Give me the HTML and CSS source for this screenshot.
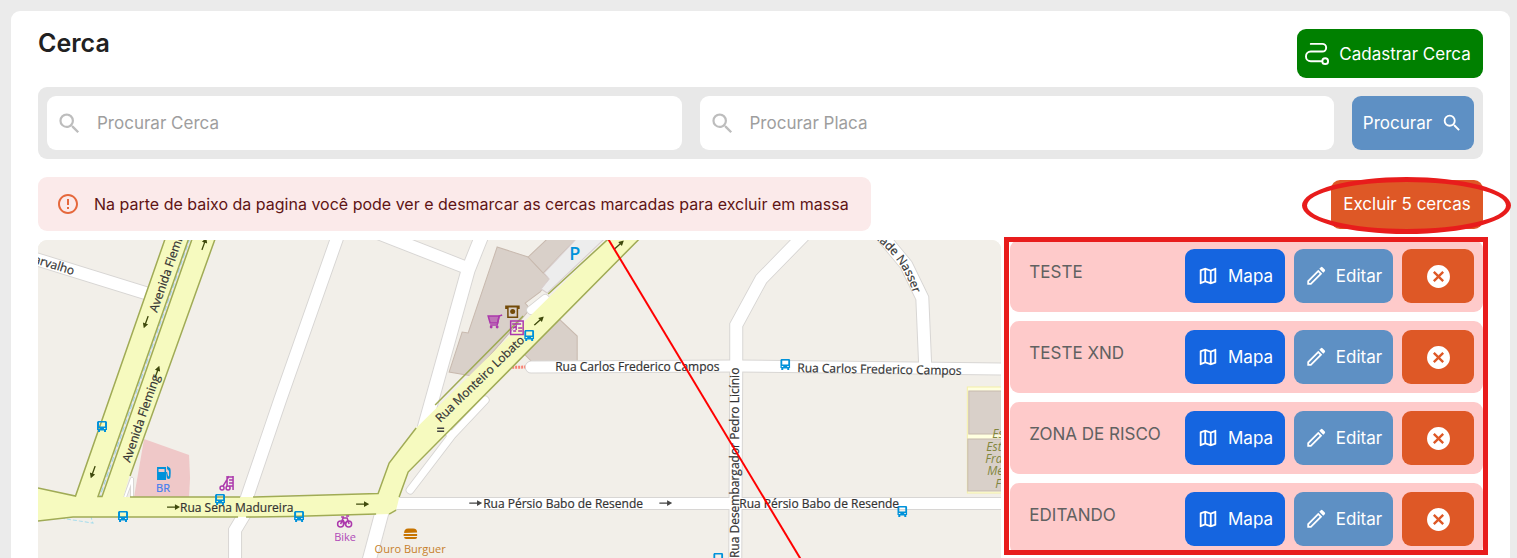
FILE: index.html
```html
<!DOCTYPE html>
<html lang="pt-BR">
<head>
<meta charset="utf-8">
<title>Cerca</title>
<link rel="stylesheet" href="styles.css">
</head>
<body>
<svg class="defs" aria-hidden="true">
  <symbol id="search" viewBox="0 0 24 24"><path d="M15.5 14h-.79l-.28-.27A6.47 6.47 0 0 0 16 9.5 6.5 6.5 0 1 0 9.5 16c1.61 0 3.09-.59 4.23-1.57l.27.28v.79l5 4.99L20.49 19l-4.99-5zm-6 0C7.01 14 5 11.99 5 9.5S7.01 5 9.5 5 14 7.01 14 9.5 11.99 14 9.5 14z"/></symbol>
  <symbol id="mapicon" viewBox="0 0 24 24"><path d="M20.5 3l-.16.03L15 5.1 9 3 3.36 4.9c-.21.07-.36.25-.36.48V20.5c0 .28.22.5.5.5l.16-.03L9 18.9l6 2.1 5.64-1.9c.21-.07.36-.25.36-.48V3.5c0-.28-.22-.5-.5-.5zM10 5.47l4 1.4v11.66l-4-1.4V5.47zM5 6.46l3-1.01v11.7l-3 1.16V6.46zm14 11.08l-3 1.01V6.86l3-1.16v11.84z"/></symbol>
  <symbol id="pencil" viewBox="0 0 24 24"><path fill-rule="evenodd" d="M2.500 21.500v-4.300L14.500 5.200l4.300 4.300L6.800 21.500zM4.500 19.500h1.500L16 9.500 14.500 8 4.500 18zM15.600 4.100l1.700-1.700q.9-.8 1.800 0l2.500 2.500q.8.900 0 1.800l-1.700 1.700z"/></symbol>
  <symbol id="cancel" viewBox="0 0 24 24"><path d="M12 1a11 11 0 1 0 0 22 11 11 0 0 0 0-22zm5.300 14.700-1.600 1.600L12 13.600l-3.700 3.700-1.600-1.600 3.700-3.700-3.700-3.700 1.600-1.600 3.700 3.700 3.700-3.700 1.600 1.600-3.700 3.700z"/></symbol>
</svg>
<main class="card">
  <header class="head">
    <h1 class="title">Cerca</h1>
    <button class="btn btn-new" type="button">
      <svg class="icon-route" viewBox="0 0 26 26" aria-hidden="true"><g fill="none" stroke="#fff" stroke-width="2" stroke-linecap="round"><path d="M6 3h12a4 4 0 0 1 0 8H6a5 5 0 0 0 0 10h11"/><circle cx="21" cy="21" r="3"/></g></svg>
      Cadastrar Cerca
    </button>
  </header>

  <form class="search" role="search">
    <label class="field"><svg class="icon-field" aria-hidden="true"><use href="#search"/></svg><input class="input" type="text" aria-label="Procurar Cerca" placeholder="Procurar Cerca"></label>
    <label class="field"><svg class="icon-field" aria-hidden="true"><use href="#search"/></svg><input class="input" type="text" aria-label="Procurar Placa" placeholder="Procurar Placa"></label>
    <button class="btn btn-search" type="button">Procurar <svg class="icon" aria-hidden="true"><use href="#search"/></svg></button>
  </form>

  <div class="notice">
    <div class="alert" role="alert">
      <svg class="icon-alert" viewBox="0 0 24 24" aria-hidden="true"><path d="M11 15h2v2h-2zm0-8h2v6h-2zm.99-5C6.470 2 2 6.480 2 12s4.470 10 9.990 10C17.520 22 22 17.520 22 12S17.520 2 11.990 2zM12 20c-4.420 0-8-3.580-8-8s3.580-8 8-8 8 3.580 8 8-3.580 8-8 8z"/></svg>
      Na parte de baixo da pagina você pode ver e desmarcar as cercas marcadas para excluir em massa
    </div>
    <div class="mass">
      <button class="btn btn-mass" type="button">Excluir 5 cercas</button>
      <span class="ring"></span>
    </div>
  </div>

  <div class="content">
    <div class="map">
      <svg class="map-svg" viewBox="38 240 963 318" preserveAspectRatio="xMinYMin slice" role="img" aria-label="Mapa">
        <defs>
          <symbol id="bus" viewBox="0 0 10 11"><path fill="#0092da" fill-rule="evenodd" d="M1 0h8l1 1v8H9v2H7V9.500H3V11H1V9H0V1zM2 1.500v4h6v-4zM1.500 7v1h1.500V7zM7 7v1h1.500V7z"/></symbol>
          <symbol id="arrow" viewBox="0 0 14 6"><path d="M0 2.300h8.500V0L14 3 8.500 6V3.700H0z"/></symbol>
          <path id="nasser" d="M873 237Q895 255 903 270T914 298"/>
          <g id="roads">
            <path d="M26 256L155 296" stroke-width="12"/>
            <path d="M337 238L280 400L247 497V510L235 530V562" stroke-width="12"/>
            <path d="M370 230L467 268" stroke-width="12"/>
            <path d="M482 235L468 270L424 428" stroke-width="13"/>
            <path d="M485 400L452 435L410 490M452 435L441 427" stroke-width="7" stroke-linecap="round"/>
            <path d="M383 508L368 564" stroke-width="13"/>
            <path d="M390 503.500H1010" stroke-width="11"/>
            <path d="M531 367L737 366L1010 369" stroke-width="11" stroke-linecap="round"/>
            <path d="M735 565L736 366V325L761 279L804 235" stroke-width="12"/>
            <path d="M877 230L906 265L922 298L925 368" stroke-width="12"/>
            <path d="M531 310L545 299" stroke-width="8" stroke-linecap="round"/>
            <path d="M125 497L132 478V498" stroke-width="2"/>
          </g>
        </defs>
        <rect x="38" y="240" width="2000" height="1200" fill="#f2efe9"/>
        <g fill="#d9d0c9" stroke="#c8b9ae" stroke-width="1">
          <path d="M497 247L528 257L549 279L540 292L525 303L530 309L472 376L449 372L462 332L468 333z"/>
          <path d="M528 257L547 239H576L543 273z"/>
          <path d="M558 318L577 336V362H532L522 352z"/>
        </g>
        <path d="M576 239H604L547 293L541 289L549 279L544 273z" fill="#ededed" stroke="#d9cfcf"/>
        <path d="M144 439L189 455L190 478L189 497H134z" fill="#efc8c8"/>
        <path d="M967 387H1010V493H967z" fill="#ffffe0" stroke="#f4f0a8"/>
        <path d="M968.500 391H1010V434H968.500zM967.500 439H1010V491H967.500z" fill="#d9d0c9" stroke="#c8b9ae"/>
        <use href="#roads" fill="none" stroke="#d8d6d4" transform="translate(1 0)"/>
        <use href="#roads" fill="none" stroke="#d8d6d4" transform="translate(-1 0)"/>
        <use href="#roads" fill="none" stroke="#d8d6d4" transform="translate(0 1)"/>
        <use href="#roads" fill="none" stroke="#d8d6d4" transform="translate(0 -1)"/>
        <use href="#roads" fill="none" stroke="#fff"/>
        <path d="M190 238L100 496" stroke="#e9e9e5" stroke-width="4"/>
        <path d="M190 238L100 496" stroke="#9fd3e6" stroke-width="1" stroke-dasharray="5 3"/>
        <path d="M61 518L93 523L91 517" fill="none" stroke="#a6dcec" stroke-dasharray="4 2"/>
        <path d="M503 367.500L525 367" stroke="#fa8072" stroke-width="3" stroke-dasharray="2 1"/>
        <g fill="#f6fabf">
          <path d="M165 239H188L98 498H75z"/>
          <path d="M192 239H215L130 474L123 498H101z"/>
          <path d="M37 488L75 496L98 497H290L378 493L389 463L416 428L608 239H639L408 472L399 498L396 510L390 514L290 517H73L37 521z"/>
        </g>
        <g fill="none" stroke="#a0ab55" stroke-width="1.500">
          <path d="M165 239L75.500 496L38 488M188.500 239L98 496.500H102L192 239M215 239L130 476M130 497H240M253 497L290 496L378 493.500L389 463L416 428M435 405L523 316M548 294L608 239M639 239L408 472L399 497M38 521L73 517H238M246 517L290 516.500L376 514M389 514L396 510"/>
        </g>
        <g fill="#3f4a0c">
          <use href="#arrow" width="13" height="6" transform="translate(199 249) rotate(-70)"/>
          <use href="#arrow" width="13" height="6" transform="translate(152 377) rotate(-70)"/>
          <use href="#arrow" width="13" height="6" transform="translate(151 317) rotate(110)"/>
          <use href="#arrow" width="13" height="6" transform="translate(98 467) rotate(110)"/>
          <use href="#arrow" width="13" height="6" x="167" y="504"/>
          <use href="#arrow" width="13" height="6" x="356" y="501"/>
          <use href="#arrow" width="13" height="6" transform="translate(532 323) rotate(-42)"/>
          <use href="#arrow" width="13" height="6" transform="translate(612 247) rotate(-42)"/>
        </g>
        <g fill="#444">
          <use href="#arrow" width="13" height="6" x="469" y="500"/>
          <use href="#arrow" width="13" height="6" x="659" y="500"/>
          <path d="M437 427.500h7v1.500h-7zM437 430.500h7v1.500h-7z"/>
        </g>
        <g>
          <use href="#bus" x="97" y="421" width="10" height="11"/>
          <use href="#bus" x="118" y="511" width="10" height="11"/>
          <use href="#bus" x="215" y="494" width="10" height="11"/>
          <use href="#bus" x="294" y="511" width="10" height="11"/>
          <use href="#bus" x="524" y="330" width="10" height="11"/>
          <use href="#bus" x="780" y="359" width="10" height="11"/>
          <use href="#bus" x="897" y="506" width="10" height="11"/>
          <use href="#bus" x="713" y="553" width="10" height="11"/>
        </g>
        <path fill="#0092da" fill-rule="evenodd" d="M157 467h9v13h-9zM158.500 469v3h6v-3zM167 466l3 2q1 1 .5 8 0 3-2 3t-2-3l-.5-4h1l1 4q1 1 1-1v-4l-2-2z"/>
        <g fill="none" stroke="#ac39ac" stroke-width="1.500">
          <circle cx="222" cy="488" r="2"/><circle cx="228" cy="488" r="2"/><path d="M223 486L229 476M227 486V476M233 476V490M229 477H233M229 480H233M229 483H233M229 486H233"/>
          <path d="M502 315L499 316L497 325H490"/><path d="M488 316H499L497.500 323H490z" fill="#ac39ac" fill-opacity=".6"/><circle cx="491" cy="327" r=".7"/><circle cx="497" cy="327" r=".7"/>
          <path d="M510.500 321H523V334.500H510.500zM512 324H521M513 328L516 326V330M513 331H516M518 328H522M518 331H522"/>
          <circle cx="340.500" cy="524" r="3"/><circle cx="348.500" cy="524" r="3"/><path d="M340.500 524L343 518H347L349 524M343 520L345 524L348 520M341 517H344M346 516H349"/>
        </g>
        <path d="M505 305.500H519.500V309H518V318H507V309H505zM508.500 307.500V316.500H516.500V307.500z" fill="#734a08" fill-rule="evenodd"/><circle cx="512.500" cy="311.500" r="2.500" fill="#734a08"/>
        <path d="M404 533q0-4.500 4-4.500h5q4 0 4 4zM403.500 534h13.500v2h-13.500zM404 537h13q0 2-2 2h-9q-2 0-2-2z" fill="#c77400"/>
        <g class="street">
          <text transform="translate(73 275) rotate(17)" text-anchor="end">arvalho</text>
          <text transform="translate(157 313) rotate(-71)">Avenida Flemin</text>
          <text transform="translate(130 463) rotate(-71)">Avenida Fleming</text>
          <text x="180" y="512">Rua Sena Madureira</text>
          <text transform="translate(440 423) rotate(-44)">Rua Monteiro Lobato</text>
          <text x="483" y="508">Rua Pérsio Babo de Resende</text>
          <text x="739" y="508">Rua Pérsio Babo de Resende</text>
          <text x="555" y="371">Rua Carlos Frederico Campos</text>
          <text transform="translate(797 372) rotate(1)">Rua Carlos Frederico Campos</text>
          <text transform="translate(739 558) rotate(-90)">Rua Desembargador Pedro Licínio</text>
          <text><textPath href="#nasser">dade Nasser</textPath></text>
        </g>
        <g class="school">
          <text x="992" y="438">Es</text><text x="986" y="451">Este</text><text x="985" y="463">Fran</text><text x="987" y="475">Mer</text><text x="995" y="488">Fi</text>
        </g>
        <text class="poi poi-fuel" x="163" y="492">BR</text>
        <text class="poi poi-bike" x="345" y="541">Bike</text>
        <text class="poi poi-food" x="410" y="553">Ouro Burguer</text>
        <text class="parking" x="569" y="260">P</text>
        <path d="M608 239L801 560" stroke="#f00" stroke-width="2"/>
      </svg>
    </div>
    <div class="list-wrap">
      <ul class="list">
        <li class="row"><span class="name">TESTE</span><button class="btn btn-map" type="button"><svg class="icon" aria-hidden="true"><use href="#mapicon"/></svg>Mapa</button><button class="btn btn-edit" type="button"><svg class="icon" aria-hidden="true"><use href="#pencil"/></svg>Editar</button><button class="btn btn-del" type="button" aria-label="Excluir TESTE"><svg class="icon-del" aria-hidden="true"><use href="#cancel"/></svg></button></li>
        <li class="row"><span class="name">TESTE XND</span><button class="btn btn-map" type="button"><svg class="icon" aria-hidden="true"><use href="#mapicon"/></svg>Mapa</button><button class="btn btn-edit" type="button"><svg class="icon" aria-hidden="true"><use href="#pencil"/></svg>Editar</button><button class="btn btn-del" type="button" aria-label="Excluir TESTE XND"><svg class="icon-del" aria-hidden="true"><use href="#cancel"/></svg></button></li>
        <li class="row"><span class="name">ZONA DE RISCO</span><button class="btn btn-map" type="button"><svg class="icon" aria-hidden="true"><use href="#mapicon"/></svg>Mapa</button><button class="btn btn-edit" type="button"><svg class="icon" aria-hidden="true"><use href="#pencil"/></svg>Editar</button><button class="btn btn-del" type="button" aria-label="Excluir ZONA DE RISCO"><svg class="icon-del" aria-hidden="true"><use href="#cancel"/></svg></button></li>
        <li class="row"><span class="name">EDITANDO</span><button class="btn btn-map" type="button"><svg class="icon" aria-hidden="true"><use href="#mapicon"/></svg>Mapa</button><button class="btn btn-edit" type="button"><svg class="icon" aria-hidden="true"><use href="#pencil"/></svg>Editar</button><button class="btn btn-del" type="button" aria-label="Excluir EDITANDO"><svg class="icon-del" aria-hidden="true"><use href="#cancel"/></svg></button></li>
      </ul>
      <span class="frame"></span>
    </div>
  </div>
</main>
</body>
</html>
```
FILE: styles.css
```css
* { box-sizing: border-box; }
body {
  margin: 0;
  padding: 11px 7px 0 11px;
  min-height: 100vh;
  display: flex;
  background: #ebebeb;
  font-family: Inter, "Liberation Sans", sans-serif;
  font-size: 17px;
  color: #212121;
}
.defs { position: absolute; width: 0; height: 0; }
.card {
  flex: 1;
  min-width: 0;
  display: flex;
  flex-direction: column;
  padding: 18px 27px 0;
  background: #fff;
  border-radius: 9px 9px 0 0;
}
.head { display: flex; justify-content: space-between; align-items: flex-start; }
.title { margin: 0; font-size: 25px; line-height: 28px; font-weight: 600; }
.btn {
  display: flex;
  align-items: center;
  justify-content: center;
  flex: none;
  padding: 0;
  border: 0;
  border-radius: 9px;
  color: #fff;
  font: inherit;
  white-space: nowrap;
}
.icon { width: 22px; height: 22px; fill: currentColor; }
.btn-new { width: 186px; height: 49px; gap: 9px; padding-right: 4px; background: #008000; }
.icon-route { width: 25px; height: 25px; }

.search {
  display: flex;
  gap: 18px;
  margin-top: 9px;
  padding: 9px;
  background: #e8e8e8;
  border-radius: 9px;
}
.field {
  flex: 1;
  min-width: 0;
  height: 54px;
  display: flex;
  align-items: center;
  gap: 14px;
  padding: 0 9px;
  background: #fff;
  border-radius: 9px;
}
.icon-field { flex: none; width: 27px; height: 27px; fill: #bdbdbd; }
.input { flex: 1; min-width: 0; padding: 0; border: 0; outline: 0; background: none; font: inherit; }
.input::placeholder { color: #9e9e9e; opacity: 1; }
.btn-search { width: 122px; height: 54px; gap: 9px; background: #5e90c4; }

.notice { display: flex; justify-content: space-between; align-items: center; margin-top: 18px; }
.alert {
  display: flex;
  align-items: center;
  gap: 14px;
  height: 54px;
  padding: 0 22px 0 18px;
  background: #fbeaea;
  border-radius: 9px;
  color: #5f1414;
  font-size: 16px;
}
.icon-alert { flex: none; width: 24px; height: 24px; fill: #e5683c; }
.mass { position: relative; }
.btn-mass { width: 152px; height: 49px; background: #de5826; }
.ring {
  position: absolute;
  inset: -3px -28px -5px -29px;
  border: 5px solid #e81c1c;
  border-radius: 50%;
}

.content { flex: 1; display: flex; gap: 9px; margin-top: 9px; }
.map {
  position: relative;
  flex: 0 0 66.6667%;
  overflow: hidden;
  border-radius: 9px 9px 0 0;
  background: #f2efe9;
}
.map-svg { position: absolute; width: 100%; height: 100%; font-family: "Open Sans", "Noto Sans", sans-serif; }
.street { font-size: 12px; fill: #333; stroke: #333; stroke-width: .2px; }
.school { font-size: 12px; font-style: italic; fill: #82863f; }
.poi { font-size: 11px; text-anchor: middle; }
.poi-fuel { fill: #3f7df0; stroke: #3f7df0; stroke-width: .2px; }
.poi-bike { fill: #b04ab8; }
.poi-food { fill: #c77f2b; }
.parking { font-size: 18px; font-weight: 600; fill: #0092da; }

.list-wrap { position: relative; flex: 1; min-width: 0; align-self: flex-start; }
.list { display: flex; flex-direction: column; gap: 9px; margin: 0; padding: 0; list-style: none; }
.row {
  display: flex;
  align-items: flex-start;
  gap: 9px;
  padding: 9px 9px 9px 19px;
  background: #fecaca;
  border-radius: 9px;
}
.name { flex: 1; min-width: 0; line-height: 46px; color: #616161; white-space: nowrap; }
.btn-map { width: 100px; height: 54px; gap: 9px; background: #1565e0; }
.btn-edit { width: 99px; height: 54px; gap: 9px; background: #5e90c4; }
.btn-del { width: 72px; height: 54px; background: #de5826; }
.icon-del { width: 25px; height: 25px; fill: #fff; }
.frame { position: absolute; inset: -3px -5px 0 -6px; border: 5px solid #e81c1c; }
```
